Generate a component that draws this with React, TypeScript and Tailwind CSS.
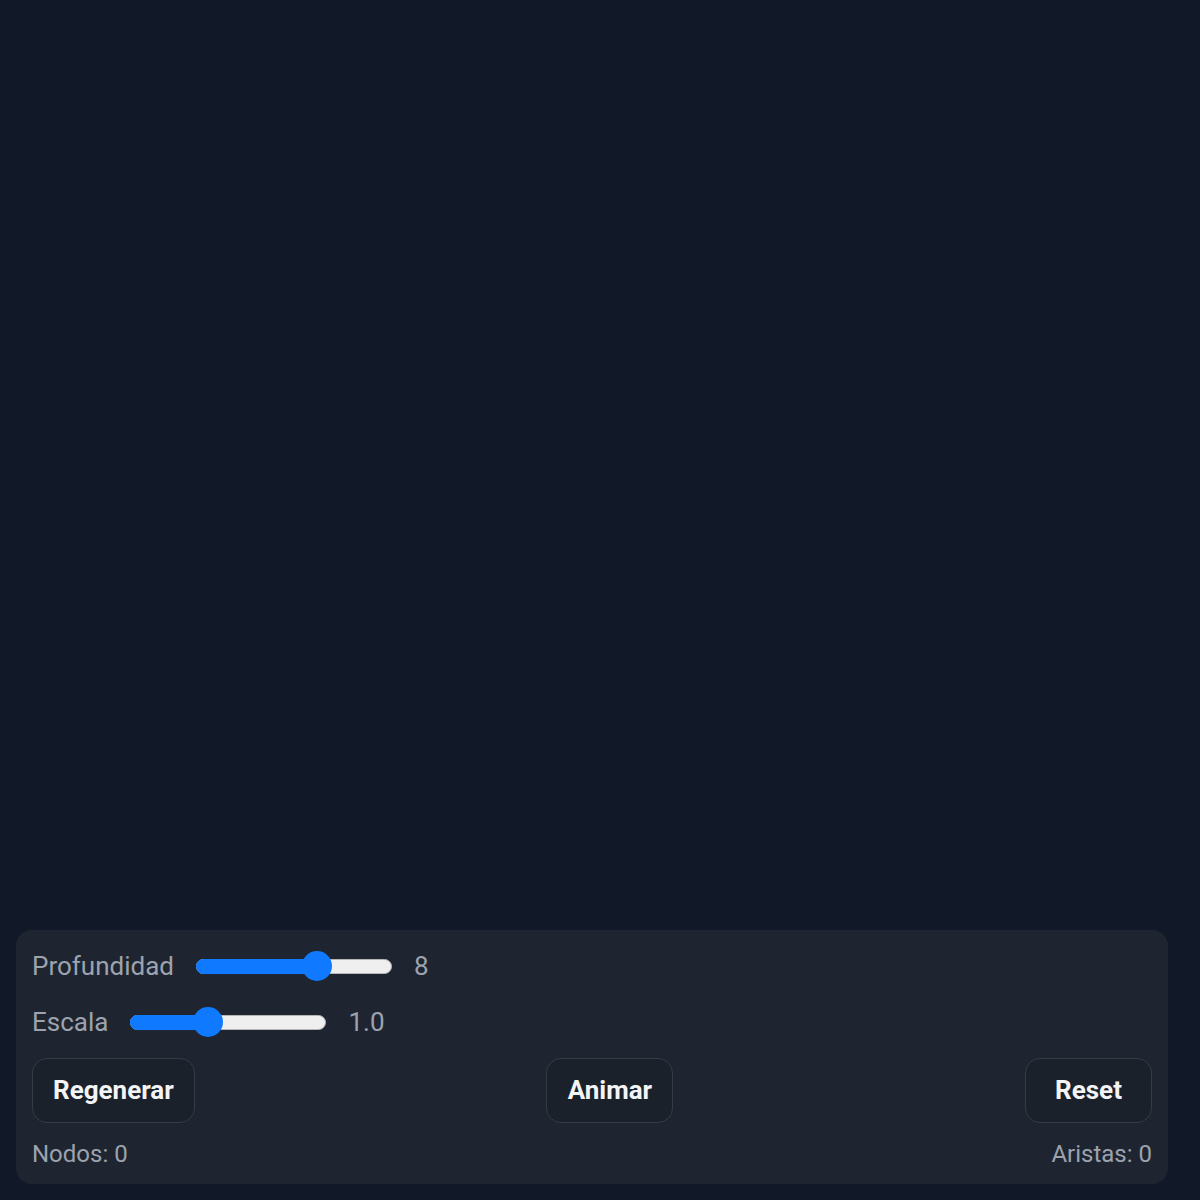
import React, { useState } from "react";

interface SliderProps {
  value: number;
  min: number;
  max: number;
}

const Slider: React.FC<SliderProps> = ({ value, min, max }) => {
  const pct = (value - min) / (max - min);
  // thumb travels inside the track, 30px thumb on a 196px track
  const center = 15 + pct * (196 - 30);
  return (
    <div className="relative h-[30px] w-[196px] shrink-0">
      <div className="absolute left-0 right-0 top-[8px] h-[15px] rounded-full border border-[#b5b5b5] bg-[#efefef]" />
      <div className="absolute left-0 top-[8px] h-[15px] rounded-full bg-[#0f7aff]" style={{ width: center }} />
      <div className="absolute top-0 h-[30px] w-[30px] rounded-full bg-[#0f7aff]" style={{ left: center - 15 }} />
    </div>
  );
};

const App: React.FC = () => {
  const [depth] = useState(8);
  const [scale] = useState(1.0);

  return (
    <div className="flex h-screen flex-col bg-[#111827]" style={{ fontFamily: "Roboto, 'Liberation Sans', sans-serif" }}>
      <div className="flex-1" />
      <div className="mb-4 ml-4 flex w-[1152px] flex-col gap-4 rounded-2xl bg-[#1f2530] p-4">
        <div className="flex h-[40px] items-center gap-[22px] text-[26px] text-[#9ca3af]">
          <span>Profundidad</span>
          <Slider value={depth} min={1} max={12} />
          <span>{depth}</span>
        </div>
        <div className="flex h-[40px] items-center gap-[22px] text-[26px] text-[#9ca3af]">
          <span>Escala</span>
          <Slider value={scale} min={0.1} max={2.5} />
          <span>{scale.toFixed(1)}</span>
        </div>
        <div className="flex items-center justify-between">
          {["Regenerar", "Animar", "Reset"].map((label) => (
            <button
              key={label}
              className="h-[65px] min-w-[127px] rounded-[15px] border-[1.5px] border-[#353c48] bg-[#1b212b] px-[20px] text-[26px] font-bold text-[#f3f4f6]"
            >
              {label}
            </button>
          ))}
        </div>
        <div className="flex h-[29px] items-center justify-between text-[24px] text-[#9ca3af]">
          <span>Nodos: 0</span>
          <span>Aristas: 0</span>
        </div>
      </div>
    </div>
  );
};

export default App;
